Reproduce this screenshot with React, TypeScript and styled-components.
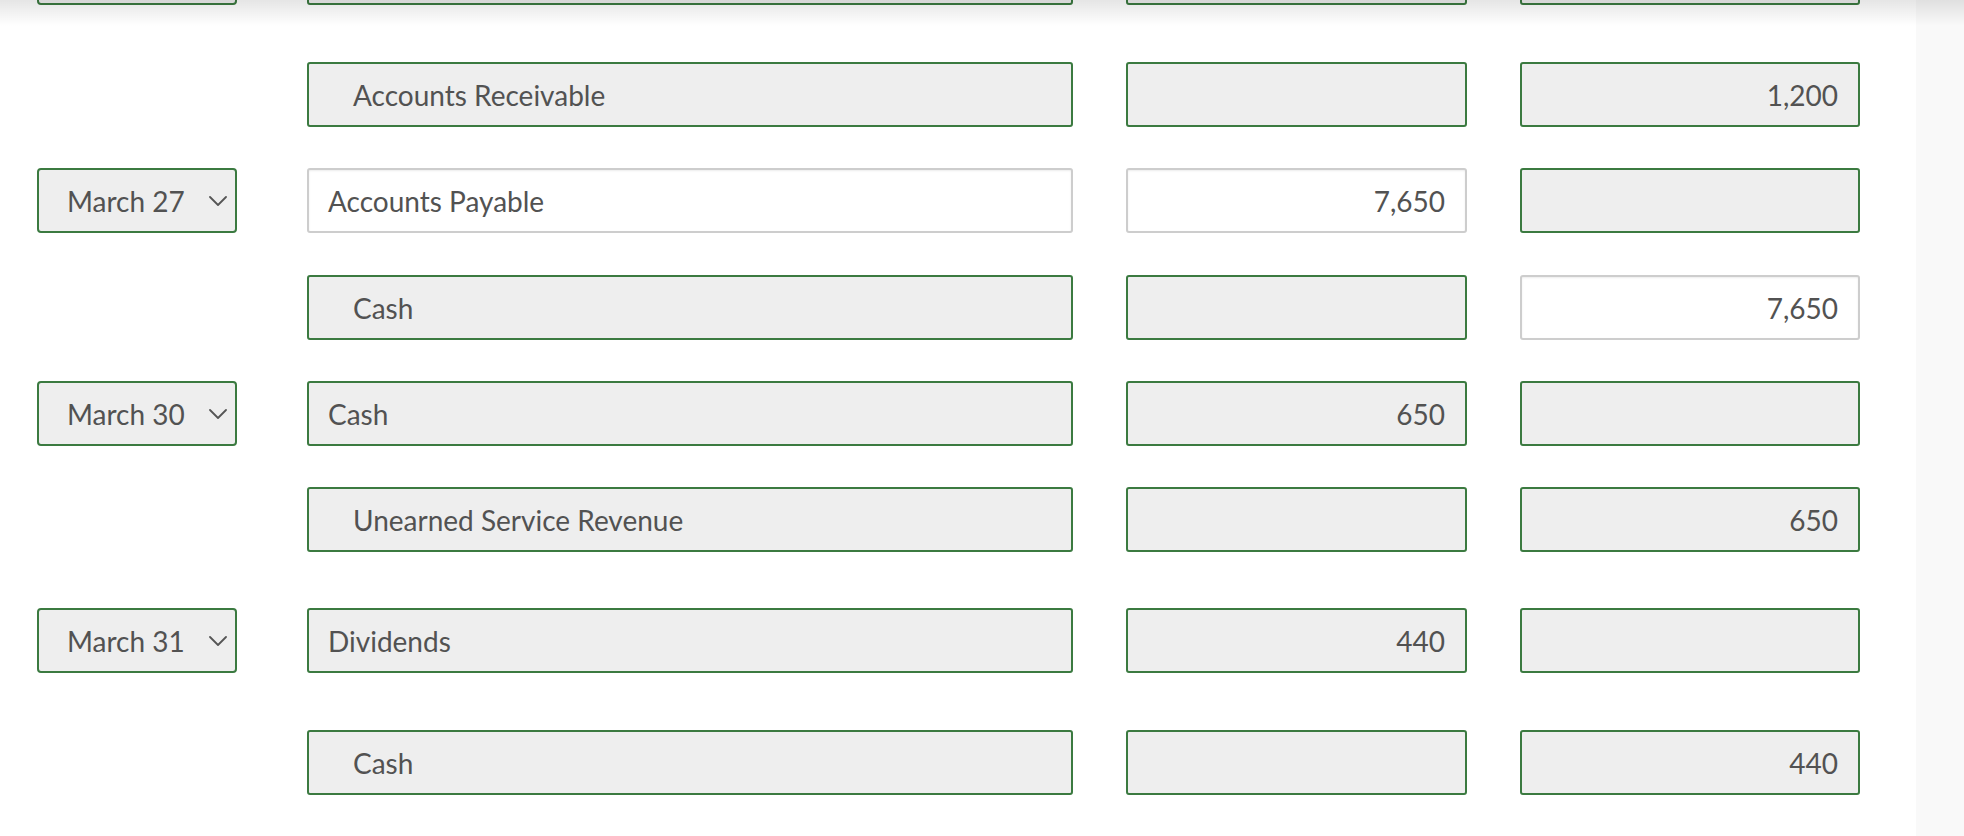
import { createGlobalStyle, styled } from "styled-components";

const GREEN = "#3b7a40";
const TEXT = "#525252";

const GlobalStyle = createGlobalStyle`
  html, body {
    margin: 0;
    padding: 0;
    background: #ffffff;
    overflow: hidden;
  }
  body {
    font-family: Lato, "Open Sans", "Liberation Sans", sans-serif;
    color: ${TEXT};
  }
`;

interface entry {
  date?: string;
  account: string;
  indent?: boolean;
  debit?: string;
  credit?: string;
  accountLocked?: boolean;
  debitLocked?: boolean;
  creditLocked?: boolean;
  gap: number;
}

const Page = styled.div`
  position: relative;
  display: flex;
  flex-direction: row;
  width: 1964px;
  height: 836px;
  overflow: hidden;
`;

const Main = styled.div`
  flex: 1;
  display: flex;
  flex-direction: column;
  padding-left: 37px;
  background: #ffffff;
`;

const Sidebar = styled.div`
  width: 48px;
  background: #f9f9f9;
`;

const TopShade = styled.div`
  position: absolute;
  left: 0;
  top: 0;
  right: 0;
  height: 26px;
  background: linear-gradient(to bottom, rgba(0, 0, 0, 0.1), rgba(0, 0, 0, 0));
  pointer-events: none;
`;

const ClippedRow = styled.div`
  height: 5px;
  overflow: hidden;
  display: flex;
  flex-direction: column;
  justify-content: flex-end;
`;

// first column is 200px wide plus 17px of extra spacing before the account field
const Row = styled.div<{ $gap: number }>`
  display: grid;
  grid-template-columns: 217px 766px 341px 340px;
  column-gap: 53px;
  margin-top: ${(p) => p.$gap}px;
  height: 65px;
`;

const Field = styled.div<{ $locked: boolean; $align?: "left" | "right"; $pad: number }>`
  box-sizing: border-box;
  height: 65px;
  display: flex;
  align-items: center;
  justify-content: ${(p) => (p.$align === "right" ? "flex-end" : "flex-start")};
  padding: ${(p) => (p.$align === "right" ? `0 ${p.$pad}px 0 0` : `0 0 0 ${p.$pad}px`)};
  border-radius: 3px;
  font-size: 28px;
  color: ${TEXT};
  white-space: nowrap;
  background: ${(p) => (p.$locked ? "#eeeeee" : "#ffffff")};
  border: 2px solid ${(p) => (p.$locked ? GREEN : "#cdcdcd")};
  box-shadow: ${(p) => (p.$locked ? "none" : "inset 0 1px 2px rgba(0, 0, 0, 0.08)")};
`;

const Select = styled.div`
  box-sizing: border-box;
  width: 200px;
  height: 65px;
  display: flex;
  align-items: center;
  justify-content: space-between;
  padding: 0 8px 0 28px;
  border-radius: 4px;
  border: 2px solid ${GREEN};
  background: #eeeeee;
  font-size: 28px;
  color: ${TEXT};
  white-space: nowrap;
`;

const Blank = styled.div``;

const Chevron = () => (
  <svg width="18" height="10" viewBox="0 0 18 10" fill="none">
    <path d="M1 1 L9 9 L17 1" stroke="#555" strokeWidth="1.8" strokeLinecap="round" strokeLinejoin="round" />
  </svg>
);

const entries: entry[] = [
  { account: "Accounts Receivable", indent: true, credit: "1,200", accountLocked: true, debitLocked: true, creditLocked: true, gap: 57 },
  { date: "March 27", account: "Accounts Payable", debit: "7,650", accountLocked: false, debitLocked: false, creditLocked: true, gap: 41 },
  { account: "Cash", indent: true, credit: "7,650", accountLocked: true, debitLocked: true, creditLocked: false, gap: 42 },
  { date: "March 30", account: "Cash", debit: "650", accountLocked: true, debitLocked: true, creditLocked: true, gap: 41 },
  { account: "Unearned Service Revenue", indent: true, credit: "650", accountLocked: true, debitLocked: true, creditLocked: true, gap: 41 },
  { date: "March 31", account: "Dividends", debit: "440", accountLocked: true, debitLocked: true, creditLocked: true, gap: 56 },
  { account: "Cash", indent: true, credit: "440", accountLocked: true, debitLocked: true, creditLocked: true, gap: 57 },
];

const EntryRow = ({ el }: { el: entry }): JSX.Element => (
  <Row $gap={el.gap}>
    {el.date ? (
      <Select>
        <span>{el.date}</span>
        <Chevron />
      </Select>
    ) : (
      <Blank />
    )}
    <Field $locked={!!el.accountLocked} $pad={el.indent ? 44 : 19}>
      {el.account}
    </Field>
    <Field $locked={!!el.debitLocked} $align="right" $pad={20}>
      {el.debit}
    </Field>
    <Field $locked={!!el.creditLocked} $align="right" $pad={20}>
      {el.credit}
    </Field>
  </Row>
);

const App = (): JSX.Element => {
  return (
    <>
      <GlobalStyle />
      <Page>
        <Main>
          <ClippedRow>
            <Row $gap={0}>
              <Select />
              <Field $locked={true} $pad={19} />
              <Field $locked={true} $pad={20} />
              <Field $locked={true} $pad={20} />
            </Row>
          </ClippedRow>
          {entries.map((el, idx) => (
            <EntryRow key={idx} el={el} />
          ))}
        </Main>
        <Sidebar />
        <TopShade />
      </Page>
    </>
  );
};

export default App;
